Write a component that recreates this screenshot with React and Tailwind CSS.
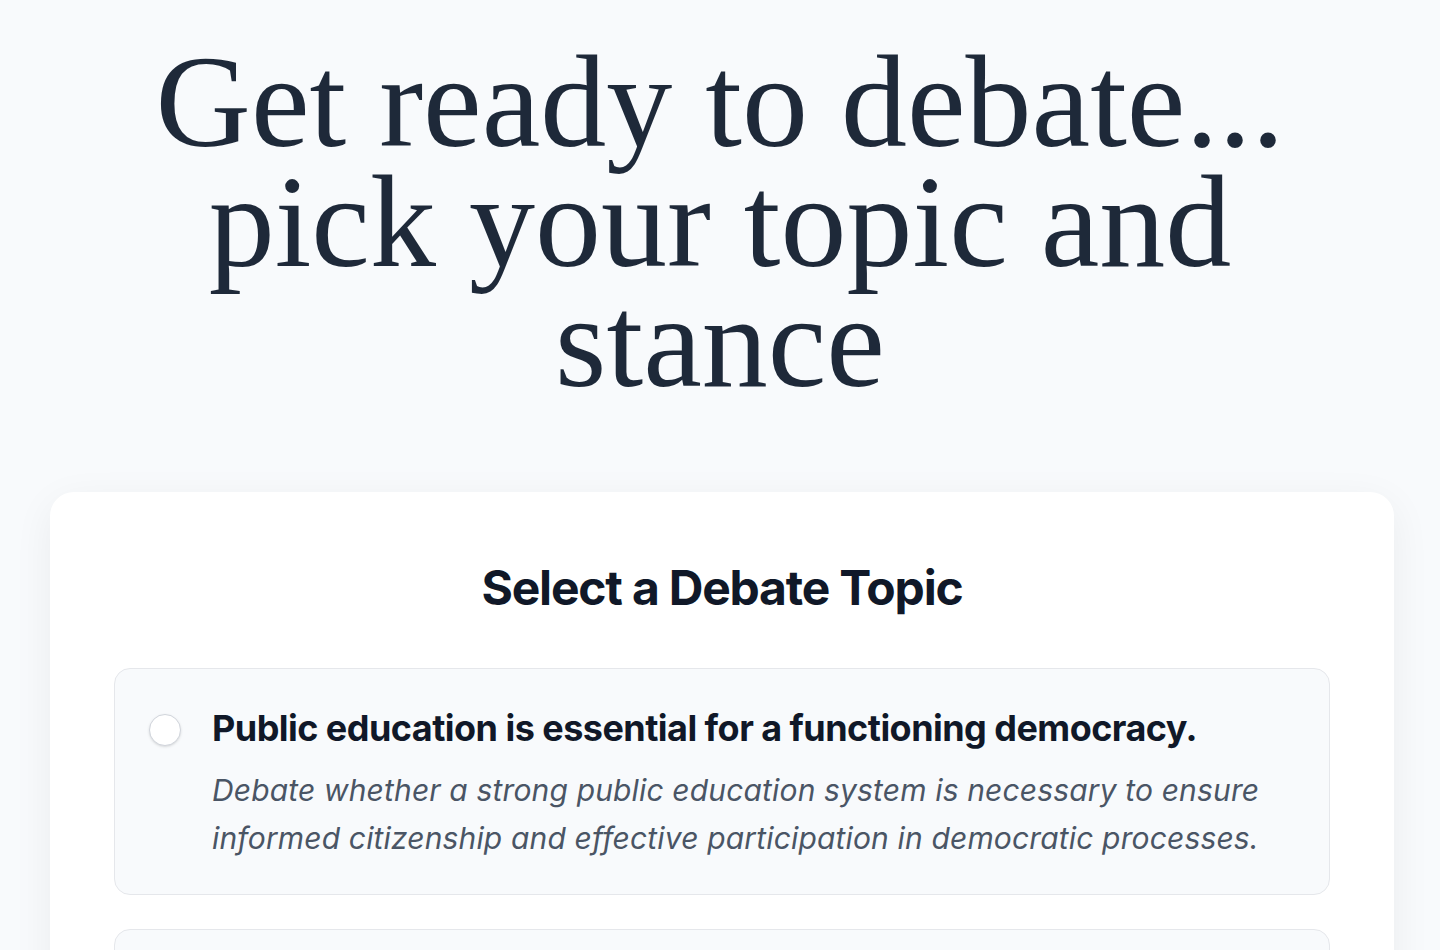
import React from "react"

const topics = [
    {
        title: "Public education is essential for a functioning democracy.",
        description:
            "Debate whether a strong public education system is necessary to ensure informed citizenship and effective participation in democratic processes.",
    },
    {
        title: "Social media does more harm than good.",
        description:
            "Discuss whether the benefits of social media platforms outweigh their negative effects on mental health, privacy and public discourse.",
    },
    {
        title: "Remote work should become the default.",
        description:
            "Consider whether companies should make remote work the standard arrangement for employees whose roles allow it.",
    },
]

function TopicOption({ topic }) {
    return (
        <label className="flex items-start gap-[31px] rounded-2xl border border-gray-200 bg-slate-50 pl-[34px] pr-10 pt-[39px] pb-8 cursor-pointer">
            {/* Radio */}
            <span className="mt-[6px] h-8 w-8 shrink-0 rounded-full border border-gray-300 bg-white shadow-sm" />
            <div className="flex-1">
                <h3 className="text-[36px] leading-[40px] font-bold tracking-[-0.015em] text-gray-900">
                    {topic.title}
                </h3>
                <p className="mt-[18px] text-[30px] leading-[48px] italic tracking-[0.005em] text-gray-600">
                    {topic.description}
                </p>
            </div>
        </label>
    )
}

export default function App() {
    return (
        <div
            className="min-h-screen bg-slate-50 pb-20"
            style={{ fontFamily: "Inter, 'Noto Sans', sans-serif" }}
        >
            {/* Hero heading */}
            <h1
                className="mx-auto max-w-[1240px] pt-[42px] text-center text-[132px] leading-[120px] text-gray-800"
                style={{ fontFamily: "'Liberation Serif', 'DejaVu Serif', serif" }}
            >
                Get ready to debate... pick your topic and stance
            </h1>

            {/* Topic card */}
            <div className="ml-[50px] mt-[90px] w-[1344px] rounded-3xl bg-white px-16 pt-[72px] pb-16 shadow-[0_10px_40px_rgba(15,23,42,0.06)]">
                <h2 className="text-center text-[48px] leading-[48px] font-bold tracking-tight text-gray-900">
                    Select a Debate Topic
                </h2>
                <div className="mt-14 flex flex-col gap-[34px]">
                    {topics.map((topic) => (
                        <TopicOption key={topic.title} topic={topic} />
                    ))}
                </div>
            </div>
        </div>
    )
}
